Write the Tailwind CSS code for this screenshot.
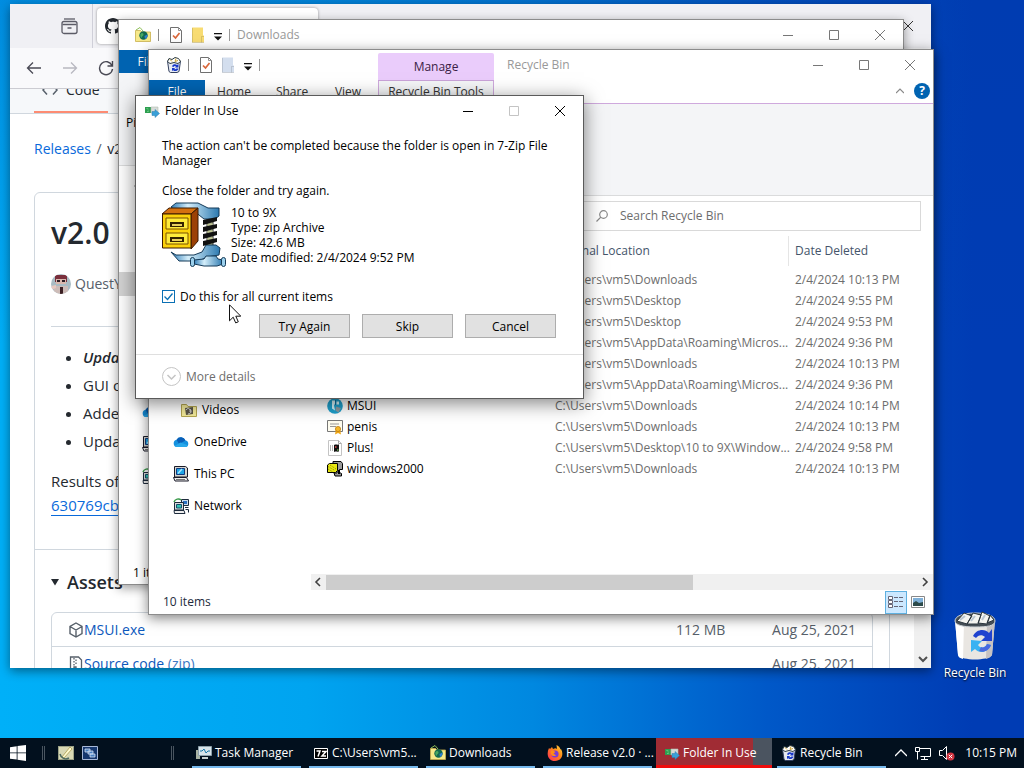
<!DOCTYPE html>
<html lang="en">
<head>
  <meta charset="UTF-8" />
  <meta name="viewport" content="width=device-width, initial-scale=1" />
  <title>Desktop</title>
  <script src="https://cdn.jsdelivr.net/npm/@tailwindcss/browser@4"></script>
</head>
<body class="h-screen flex flex-col overflow-hidden font-['Open_Sans','Noto_Sans',sans-serif] text-xs text-black bg-[linear-gradient(to_bottom,rgba(0,60,170,0.3),transparent_45%),linear-gradient(to_right,#00b0f8,#00a4f0_30%,#0088e0_52%,#0058c8_75%,#003cb4_95%)]">

  <!-- shared icons -->
  <svg class="hidden" xmlns="http://www.w3.org/2000/svg">
    <symbol id="i-downloads" viewBox="0 0 16 16">
      <path d="M.5 3.500h5l1.500 1.500h8.500v9.500H.5z" fill="#f7e98a" stroke="#c9b04c" stroke-width=".8"/>
      <path d="M1 3l4-2.500L8 4" fill="none" stroke="#8fbf5a"/>
      <circle cx="8.500" cy="8.500" r="4.200" fill="#12694f"/>
      <path d="M5.500 7c1.500-2 3-1 3 .5S7 9 6.500 11c-1-1-1.500-2.500-1-4z" fill="#4aa860"/>
      <path d="M9.500 9l3-1.500c.3 2-.5 3.500-2.500 4.500z" fill="#2f7fd0"/>
    </symbol>
    <symbol id="i-bin" viewBox="0 0 16 16">
      <path d="M1.500 4h13L13 14.500l-2 1H4.500l-1.500-1z" fill="#e6eaf2" stroke="#33405f" stroke-width="1"/>
      <path d="M1.500 4.500L3 1.500l3 1L9 .5l3.500 1 2 3L12 6.500 8 5.500 4 6.500z" fill="#fff" stroke="#2b3a40"/>
      <path d="M4 2.500l2 2M10 1.500l-1 3 3-1" stroke="#c9a030" fill="none"/>
      <path d="M6 9.500a3 3 0 0 1 5-1.500l1.500-1v3.500H9l1-1A1.800 1.800 0 0 0 7.500 10zM12.500 11.500a3.200 3.200 0 0 1-5.300 1.700l-1.200.9V11h3.200l-1 1a1.800 1.800 0 0 0 2.300-.5z" fill="#1838c8"/>
    </symbol>
    <symbol id="i-props" viewBox="0 0 16 16">
      <path d="M2.500.5h8l3 3v12h-11z" fill="#fff" stroke="#707070"/>
      <path d="M10.500.5v3h3" fill="none" stroke="#909090"/>
      <path d="M5 8.500l2.500 2.500 4-5" fill="none" stroke="#d9663a" stroke-width="1.700"/>
    </symbol>
    <symbol id="i-newfolder" viewBox="0 0 16 16">
      <path d="M2 .5h11v8h1v7H2z" fill="currentColor"/>
      <path d="M2.500 15V1M11.500 15.500v-6h2.500M2 15.500h12" fill="none" stroke="#000" stroke-opacity=".12"/>
    </symbol>
    <symbol id="i-more" viewBox="0 0 8 8">
      <path d="M0 0h8v1.200H0zM0 3.500h8L4 7.500z" fill="#111"/>
    </symbol>
    <symbol id="i-copy" viewBox="0 0 16 16">
      <path d="M1 4h6v6H1z" fill="#2e9e50"/>
      <path d="M7 4h7v6H7z" fill="#d8dcd8" stroke="#b4bcb4" stroke-width=".6"/>
      <path d="M2.500 5.500l2 .6M5 8l-2 .5" stroke="#6fd088"/>
      <path d="M8 8.500h3V6.500l4.500 4-4.500 4v-2H8z" fill="#3aa0d8" stroke="#2b7fb0" stroke-width=".5"/>
    </symbol>
    <symbol id="i-min" viewBox="0 0 10 10"><path d="M0 5.500h10" stroke="currentColor"/></symbol>
    <symbol id="i-max" viewBox="0 0 10 10"><path d="M.5.500h9v9h-9z" fill="none" stroke="currentColor"/></symbol>
    <symbol id="i-close" viewBox="0 0 10 10"><path d="M0 0l10 10M10 0L0 10" stroke="currentColor" fill="none"/></symbol>
    <symbol id="i-cloud" viewBox="0 0 16 16">
      <path d="M4 13a3.700 3.700 0 0 1-.4-7.300A5 5 0 0 1 12.500 6.500 3.300 3.300 0 0 1 12.600 13z" fill="#1490df"/>
      <path d="M3.600 5.700A5 5 0 0 1 12.500 6.500L6 10z" fill="#0a5fb8"/>
      <path d="M1.500 12l6-3.500 7.500 2.700A3 3 0 0 1 12.600 13H4a3.600 3.600 0 0 1-2.500-1z" fill="#28a8ea"/>
    </symbol>
    <symbol id="i-pc" viewBox="0 0 16 16">
      <path d="M1.500.5h11l2 1.500v9h-13z" fill="#d6d6ce" stroke="#1a1a28"/>
      <path d="M3.500 2.500h8v6h-8z" fill="#1fa6e6" stroke="#123a80"/>
      <path d="M5 7.500l4-4.500" stroke="#a8e8ff" stroke-width="1.500"/>
      <path d="M.5 11.500h13l2 3.500H2z" fill="#eee" stroke="#1a1a28"/>
      <path d="M3 13.500h9" stroke="#777"/>
    </symbol>
    <symbol id="i-net" viewBox="0 0 16 16">
      <path d="M8.500 1.500h7v6h-7z" fill="#cde" stroke="#1d2a3c"/>
      <path d="M10 3h4v3h-4z" fill="#2a6fc0"/>
      <path d="M1.500 4.500h9v7.500h-9z" fill="#ddd" stroke="#1d2a3c"/>
      <path d="M3.500 6.500h5v3.500h-5z" fill="#36c6b8" stroke="#14506a"/>
      <path d="M1 12.500h10l1 3H1.500zM12 9.500h3.500M12.500 11.500h3v3" fill="#eee" stroke="#1d2a3c"/>
      <path d="M1 4c1-3 5-4 7-2" stroke="#3a9a4a" stroke-width="1.500" fill="none"/>
    </symbol>
  </svg>

  <main class="relative flex-1 overflow-hidden">

    <!-- browser -->
    <section class="absolute left-[10px] top-1 right-[93px] bottom-[70px] bg-white flex flex-col overflow-hidden shadow-[0_3px_10px_rgba(0,0,0,0.45)]">
      <div class="h-11 shrink-0 bg-[#f0f0f4] flex items-center">
        <div class="w-[83px] h-full border-r border-[#cfcfd8] flex items-center justify-end pr-3.5">
          <svg class="size-[17px] text-[#5b5b66]" viewBox="0 0 17 17" fill="none" stroke="currentColor" stroke-width="1.300"><path d="M3 1h11"/><rect x="1" y="3.500" width="15" height="12" rx="2"/><path d="M1.500 6.500h14M6.500 10h4"/></svg>
        </div>
        <div class="ml-1 w-[221px] h-9 bg-white rounded-sm shadow-[0_0_3px_rgba(0,0,0,0.4)] flex items-center pl-2">
          <svg class="size-4" viewBox="0 0 16 16" fill="#24292f"><path d="M8 0C3.580 0 0 3.580 0 8c0 3.540 2.290 6.530 5.470 7.590.4.070.55-.17.55-.38 0-.19-.01-.82-.01-1.490-2.010.37-2.530-.49-2.690-.94-.09-.23-.48-.94-.82-1.130-.28-.15-.68-.52-.01-.53.63-.01 1.080.58 1.230.82.72 1.210 1.870.87 2.330.66.07-.52.28-.87.51-1.070-1.780-.2-3.640-.89-3.640-3.950 0-.87.31-1.590.82-2.150-.08-.2-.36-1.020.08-2.120 0 0 .67-.21 2.200.82.64-.18 1.320-.27 2-.27s1.360.09 2 .27c1.530-1.040 2.200-.82 2.200-.82.44 1.100.16 1.920.08 2.120.51.56.82 1.270.82 2.150 0 3.070-1.870 3.750-3.650 3.950.29.25.54.73.54 1.480 0 1.070-.01 1.930-.01 2.200 0 .21.15.46.55.38A8 8 0 0 0 16 8c0-4.420-3.580-8-8-8z"/></svg>
        </div>
        <button aria-label="Close browser" class="ml-auto mr-[18px] text-[#333]"><svg class="size-2.5"><use href="#i-close"/></svg></button>
      </div>
      <div class="h-[41px] shrink-0 bg-[#f9f9fb] border-b border-[#ccccd2] flex items-center pl-4 gap-5 text-[#4a4a55]">
        <button aria-label="Back"><svg class="size-4" viewBox="0 0 16 16" fill="none" stroke="currentColor" stroke-width="1.300"><path d="M15 8H1.500M7 2.500L1.500 8 7 13.500"/></svg></button>
        <button aria-label="Forward" class="text-[#b8b8c0]"><svg class="size-4" viewBox="0 0 16 16" fill="none" stroke="currentColor" stroke-width="1.300"><path d="M1 8h13.500M9 2.500L14.500 8 9 13.500"/></svg></button>
        <button aria-label="Reload"><svg class="size-4" viewBox="0 0 16 16" fill="none" stroke="currentColor" stroke-width="1.400"><path d="M14 5.500A6.500 6.500 0 1 0 14.500 9M14.500 1v5H9.500"/></svg></button>
      </div>

      <div class="flex-1 min-h-0 flex">
        <div class="flex-1 min-w-0 overflow-hidden text-[#24292f]">
          <nav class="h-[25px] bg-[#f6f8fa] border-b border-[#d0d7de] flex items-end pl-6">
            <a href="#" class="h-[33px] border-b-2 border-[#fd8c73] flex items-start gap-2 px-2 text-sm leading-5">
              <svg class="size-4 mt-0.5" viewBox="0 0 16 16" fill="none" stroke="#57606a" stroke-width="1.500"><path d="M5 3.500L1 8l4 4.500M11 3.500L15 8l-4 4.500"/></svg>
              Code
            </a>
          </nav>
          <p class="mt-[23px] ml-6 text-sm leading-6 text-[#57606a]"><a href="#" class="text-[#0969da]">Releases</a> <span class="mx-0.5">/</span> <span class="text-[#24292f]">v2.0</span></p>

          <article class="mt-[31px] ml-6 mr-6 border border-[#d0d7de] rounded-md">
            <div class="px-4 pt-5">
              <h1 class="text-[30px] leading-10 font-semibold">v2.0</h1>
              <p class="mt-[19px] flex items-center gap-1 text-sm leading-6 text-[#57606a]">
                <svg class="size-5 rounded-full" viewBox="0 0 20 20"><path d="M0 0h20v20H0z" fill="#a9bcc4"/><path d="M4 1h12v7H4z" fill="#7a2f3c"/><path d="M5 5h10v5H5z" fill="#d9b8ae"/><path d="M6 6h3v2H6zM11 6h3v2h-3z" fill="#2a1c22"/><path d="M3 12h14v8H3z" fill="#cdbcb8"/><path d="M9 13h3v7H9z" fill="#3c2024"/><path d="M0 12l5-1v3l-5 2z" fill="#e8c8c0"/></svg>
                QuestYouCraft
              </p>
              <hr class="mt-[30px] border-[#d0d7de]" />
              <ul class="mt-4 pl-8 list-disc text-[15px] leading-[28px]">
                <li><b class="italic font-semibold">Updated</b></li>
                <li>GUI optimized</li>
                <li>Added more</li>
                <li>Updated tools</li>
              </ul>
              <p class="mt-3.5 text-[15px] leading-6">Results of the scan</p>
              <p class="text-[15px] leading-6"><a href="#" class="text-[#0969da] border-b border-[#0969da]">630769cb0f</a></p>
            </div>
            <div class="mt-8 border-t border-[#d0d7de] px-4 pt-[18px]">
              <h2 class="flex items-center gap-2 text-lg leading-7 font-semibold"><svg class="size-2" viewBox="0 0 8 8"><path d="M0 1h8L4 7.500z" fill="#24292f"/></svg>Assets</h2>
              <ul class="mt-4 border border-[#d0d7de] rounded-md text-sm leading-6 text-[#57606a]">
                <li class="flex items-center h-[34px] px-4 border-b border-[#d0d7de]">
                  <svg class="size-4 shrink-0" viewBox="0 0 16 16" fill="none" stroke="#57606a" stroke-width="1.400"><path d="M8 1l6 3.500v7L8 15l-6-3.500v-7zM2 4.500L8 8l6-3.500M8 8v7"/></svg>
                  <a href="#" class="flex-1 font-medium text-[#0c58bc]">MSUI.exe</a>
                  <span class="w-24">112 MB</span>
                  <span>Aug 25, 2021</span>
                </li>
                <li class="flex items-center h-[34px] px-4">
                  <svg class="size-4 shrink-0" viewBox="0 0 16 16" fill="none" stroke="#57606a" stroke-width="1.300"><path d="M2.500 1h8l3 3v11h-11zM6 2v1.500M8 3.500V5M6 5v1.500M8 6.500V8M6 8v1.500M6 11h2v2.500H6z"/></svg>
                  <a href="#" class="flex-1 text-[#3b78c4]"><span class="font-medium text-[#0c58bc]">Source code</span> (zip)</a>
                  <span>Aug 25, 2021</span>
                </li>
              </ul>
            </div>
          </article>
        </div>
        <div class="w-[17px] bg-[#f0f0f0] flex flex-col justify-end items-center pb-1">
          <svg class="size-2.5" viewBox="0 0 10 10" fill="none" stroke="#505050" stroke-width="2"><path d="M1 3l4 4 4-4"/></svg>
        </div>
      </div>
    </section>

    <!-- Downloads window -->
    <section class="absolute left-[118px] top-[19px] right-[120px] bottom-[153px] bg-white border border-[#8c8c8c] flex flex-col overflow-hidden shadow-[0_3px_10px_rgba(0,0,0,0.4)]">
      <header class="h-[30px] shrink-0 flex items-center pl-4">
        <svg class="size-4"><use href="#i-downloads"/></svg>
        <span class="w-px h-3 bg-[#888] ml-[7px] mr-2"></span>
        <svg class="size-4 ml-px"><use href="#i-props"/></svg>
        <svg class="size-4 ml-1.5 text-[#f8dc72]"><use href="#i-newfolder"/></svg>
        <svg class="size-2 ml-2 mt-1"><use href="#i-more"/></svg>
        <span class="w-px h-3 bg-[#999] mx-[7px]"></span>
        <span class="text-[#999]">Downloads</span>
        <div class="ml-auto mr-[18px] flex gap-9 text-[#777]">
          <button aria-label="Minimize"><svg class="size-2.5"><use href="#i-min"/></svg></button>
          <button aria-label="Maximize"><svg class="size-2.5"><use href="#i-max"/></svg></button>
          <button aria-label="Close"><svg class="size-2.5"><use href="#i-close"/></svg></button>
        </div>
      </header>
      <div class="h-[23px] shrink-0"><button class="w-14 h-full bg-[#0063b1] text-white">File</button></div>
      <div class="h-[93px] shrink-0 bg-[#f4f5f7] border-b border-[#dadbdc] pl-[7px] pt-10 leading-5">Pin to Quick access</div>
      <div class="h-10 shrink-0 flex items-center pl-3.5">
        <svg class="size-2" viewBox="0 0 8 8"><path d="M6 0v8L1 4z" fill="#666"/></svg>
      </div>
      <div class="flex-1 min-h-0 pt-[66px]">
        <div class="h-6 w-40 bg-[#d3d3d3]"></div>
        <div class="mt-[108px] pl-[23px] flex flex-col gap-4">
          <svg class="size-4"><use href="#i-cloud"/></svg>
          <svg class="size-4"><use href="#i-pc"/></svg>
          <svg class="size-4"><use href="#i-net"/></svg>
        </div>
      </div>
      <footer class="h-[22px] shrink-0 pl-3.5 leading-[22px]">1 item</footer>
    </section>

    <!-- Recycle Bin window -->
    <section class="absolute left-[148px] top-[49px] right-[90px] bottom-[123px] bg-white border border-[#8c8c8c] flex flex-col overflow-hidden shadow-[0_3px_12px_rgba(0,0,0,0.5)]">
      <header class="shrink-0 flex border-b border-[#cfa9dd]">
        <div class="w-[229px]">
          <div class="h-[30px] flex items-center pl-[17px]">
            <svg class="size-4"><use href="#i-bin"/></svg>
            <span class="w-px h-3 bg-[#888] ml-1.5 mr-2"></span>
            <svg class="size-4 ml-px"><use href="#i-props"/></svg>
            <svg class="size-4 ml-1.5 text-[#d3deee]"><use href="#i-newfolder"/></svg>
            <svg class="size-2 ml-2 mt-1"><use href="#i-more"/></svg>
            <span class="w-px h-3 bg-[#999] ml-[7px]"></span>
          </div>
          <nav class="h-[23px] flex text-[#333]">
            <button class="w-14 bg-[#0063b1] text-white">File</button>
            <button class="w-[58px]">Home</button>
            <button class="w-[58px]">Share</button>
            <button class="w-[54px]">View</button>
          </nav>
        </div>
        <div class="w-[116px] pt-[3px] flex flex-col">
          <button class="h-7 bg-[#eaccfb] rounded-t-xs border-b border-[#c9a2d8] text-[#3a2246]">Manage</button>
          <button class="h-[22px] border-x border-[#cfa9dd] bg-[#f4f5f7] text-[#333] whitespace-nowrap">Recycle Bin Tools</button>
        </div>
        <div class="flex-1">
          <div class="h-[30px] flex items-center pl-[13px] pr-[18px] text-[#777]">
            <span class="text-[#999]">Recycle Bin</span>
            <div class="ml-auto flex gap-9">
              <button aria-label="Minimize"><svg class="size-2.5"><use href="#i-min"/></svg></button>
              <button aria-label="Maximize"><svg class="size-2.5"><use href="#i-max"/></svg></button>
              <button aria-label="Close"><svg class="size-2.5"><use href="#i-close"/></svg></button>
            </div>
          </div>
          <div class="h-[22px] flex items-center justify-end gap-2.5 pr-[3px]">
            <svg class="size-2" viewBox="0 0 8 8" fill="none" stroke="#888" stroke-width="1.200"><path d="M0 6l4-4 4 4"/></svg>
            <button aria-label="Help" class="size-4 rounded-full bg-[#0063b1] text-white font-bold leading-4">?</button>
          </div>
        </div>
      </header>
      <div class="h-[92px] shrink-0 bg-[#f4f5f7] border-b border-[#dadbdc]"></div>
      <div class="h-10 shrink-0 flex items-center justify-end pr-3">
        <label class="w-[338px] h-[30px] border border-[#d9d9d9] flex items-center pl-3 gap-3">
          <svg class="size-3 shrink-0" viewBox="0 0 12 12" fill="none" stroke="#888" stroke-width="1.200"><circle cx="7.500" cy="4.500" r="3.800"/><path d="M4.800 7.200L.5 11.500"/></svg>
          <input type="text" aria-label="Search Recycle Bin" placeholder="Search Recycle Bin" class="flex-1 outline-none placeholder:text-[#6d6d6d]" />
        </label>
      </div>
      <div class="flex-1 min-h-0 flex">
        <nav class="w-[162px] flex flex-col justify-start pt-[166px] pl-6 gap-4">
          <a href="#" class="flex items-center gap-[5px] h-4 pl-2"><svg class="size-4" viewBox="0 0 16 16"><path d="M.5 2.500h5l1.500 2h8.500v10H.5z" fill="#f3ea9a" stroke="#b3a550"/><path d="M4 6l8-1v7l-7 1z" fill="#5a5648"/><path d="M5 8c2-3 5-1 4 2M7 12c3 0 4-3 2-5" stroke="#ddd" fill="none"/></svg>Videos</a>
          <a href="#" class="flex items-center gap-[5px] h-4"><svg class="size-4"><use href="#i-cloud"/></svg>OneDrive</a>
          <a href="#" class="flex items-center gap-[5px] h-4"><svg class="size-4"><use href="#i-pc"/></svg>This PC</a>
          <a href="#" class="flex items-center gap-[5px] h-4"><svg class="size-4"><use href="#i-net"/></svg>Network</a>
        </nav>
        <div class="flex-1 min-w-0 flex flex-col">
          <table class="w-full table-fixed text-left text-[#6d6d6d]">
            <thead>
              <tr class="h-[33px] text-[#44546a] align-top leading-[30px]">
                <th class="p-0 w-[238px] font-normal pl-4">Name</th>
                <th class="p-0 w-[239px] font-normal pl-1.5">Original Location</th>
                <th class="p-0 font-normal"><span class="block pl-1.5 border-l border-[#e5e5e5]">Date Deleted</span></th>
              </tr>
            </thead>
            <tbody id="files"></tbody>
          </table>
          <div class="mt-auto h-4 bg-[#f0f0f0] flex items-center">
            <svg class="w-[15px] h-2.5" viewBox="0 0 15 10" fill="none" stroke="#404040" stroke-width="1.600"><path d="M9 1L5 5l4 4"/></svg>
            <div class="h-[15px] w-[59%] bg-[#cdcdcd]"></div>
            <svg class="w-[15px] h-2.5 ml-auto" viewBox="0 0 15 10" fill="none" stroke="#404040" stroke-width="1.600"><path d="M5 1l4 4-4 4"/></svg>
          </div>
        </div>
      </div>
      <footer class="h-6 shrink-0 flex items-center pl-3.5 pr-1 text-[#222b3c]">
        10 items
        <button aria-label="Details view" class="ml-auto w-[22px] h-[23px] bg-[#cce8ff] border border-[#5fb0e0] flex items-center justify-center"><svg class="size-4" viewBox="0 0 16 16" fill="none" stroke="#667"><path d="M.5 2.500h4v3h-4zM.5 6.500h4v3h-4zM.5 10.500h4v3h-4z" fill="#fff"/><path d="M6 3.500h4M11 3.500h4M6 7.500h4M11 7.500h4M6 12.500h4M11 12.500h4"/></svg></button>
        <button aria-label="Thumbnail view" class="w-[22px] h-[23px] flex items-center justify-center"><svg class="w-3.5 h-3" viewBox="0 0 14 12"><path d="M.5.500h13v11H.5z" fill="#fff" stroke="#888"/><path d="M2 2h10v8H2z" fill="#7fb0d8"/><path d="M2 7l3-2 3 2 4-1v4H2z" fill="#2c4a4a"/></svg></button>
      </footer>
    </section>

    <!-- desktop shortcut -->
    <a href="#" class="absolute right-[9px] bottom-[57px] w-20 flex flex-col items-center gap-1 text-white [text-shadow:0_1px_2px_#000]">
      <svg class="w-11 h-[52px]" viewBox="0 0 44 52">
        <path d="M2 11h40l-3 35c-4 6-30 6-34 0z" fill="#e9e6e2"/>
        <path d="M2 11l9 3-1 36c-3-1-5-2-5-4z" fill="#fff"/>
        <path d="M34 14l8-3-3 35c-1 2-3 3-6 4z" fill="#c6c2c2"/>
        <path d="M2 12c0-5 8-8 20-8s20 3 20 8-8 6-20 6S2 16 2 12z" fill="#454e56" stroke="#cfd4d8"/>
        <path d="M4 12l7-8 8 3-5 8zM14 15l6-11 8 2-3 9zM25 14l4-11 8 4-3 8zM34 14l3-8 4 5z" fill="#f4f4f0" stroke="#2c363e"/>
        <path d="M7 11l5-4M18 12l4-5M29 11l3-5" stroke="#b8c4d0" stroke-width="2"/>
        <path d="M20 27c3-7 12-8 16-3l3-4v12H28l4-4c-3-3-7-2-9 1z" fill="#2143cf"/>
        <path d="M38 36c-3 8-12 9-16 4l-4 3V31l11 1-4 4c3 4 7 3 9-1z" fill="#39b2f2"/>
        <path d="M38 36c-2 6-8 8-12 6l2-4c2 1 5 0 6-3z" fill="#4a68e0"/>
      </svg>
      Recycle Bin
    </a>

    <!-- Folder In Use dialog -->
    <section role="dialog" aria-label="Folder In Use" class="absolute left-[135px] top-[95px] w-[449px] bg-white border border-[#5a5a5a] flex flex-col shadow-[0_4px_18px_rgba(0,0,0,0.5)]">
      <header class="h-[30px] flex items-center pl-2 pr-[18px]">
        <svg class="size-4 mr-[5px]"><use href="#i-copy"/></svg>
        Folder In Use
        <div class="ml-auto flex gap-9">
          <button aria-label="Minimize"><svg class="size-2.5"><use href="#i-min"/></svg></button>
          <button aria-label="Maximize" disabled class="text-[#c4c4c4]"><svg class="size-2.5"><use href="#i-max"/></svg></button>
          <button aria-label="Close"><svg class="size-2.5"><use href="#i-close"/></svg></button>
        </div>
      </header>
      <div class="pl-[26px] pr-[27px] pt-3 leading-[15px]">
        <p>The action can't be completed because the folder is open in 7-Zip File Manager</p>
        <p class="mt-[15px]">Close the folder and try again.</p>
        <div class="mt-1 flex gap-[5px]">
          <svg class="w-16 h-[65px]" viewBox="0 0 64 65">
            <defs><linearGradient id="steel" x1="0" x2="1"><stop offset="0" stop-color="#2f7db8"/><stop offset=".35" stop-color="#d4eefa"/><stop offset="1" stop-color="#2c79b0"/></linearGradient></defs>
            <path d="M45 12h6v40h-6z" fill="#a8b088" stroke="#333"/>
            <path d="M9 5l5-4h22l10 5h11v8l-4 3H42L32 9H14z" fill="url(#steel)" stroke="#153a58"/>
            <path d="M9 50l5 3h18l8-3 4-7h10l4 3-1 7-12 2-8 4H17z" fill="url(#steel)" stroke="#153a58"/>
            <path d="M41 18l14-3v4l-14 4zM41 25l14-3v4l-14 4zM41 32l14-3v4l-14 4zM41 39l14-3v4l-14 4z" fill="#111"/>
            <path d="M45 23l6-1M45 30l6-1M45 37l6-1" stroke="#c8cc9a"/>
            <path d="M0 12l7-6h29l-7 6z" fill="#d47010" stroke="#3c1a00"/>
            <path d="M29 12l7-6v33l-7 8z" fill="#9c4106" stroke="#3c1a00"/>
            <path d="M.5 12H29v34H.5z" fill="#fbd20a" stroke="#3c1a00"/>
            <path d="M4 16h22v11H4zM4 31h22v11H4z" fill="#ffec3c" stroke="#7a5000"/>
            <path d="M8 20h14v5H8zM8 35h14v5H8z" fill="#332200"/>
            <path d="M10 23h10M10 38h10" stroke="#e8d060" stroke-width="2"/>
            <path d="M32 58l10-1 2-3h10l2 3 5 1v4l-6 2H42l-10-2z" fill="url(#steel)" stroke="#153a58"/>
            <rect x="28.500" y="55.500" width="4" height="9" rx="2" fill="#9cd0ec" stroke="#153a58"/>
            <rect x="59.500" y="55.500" width="4" height="9" rx="2" fill="#9cd0ec" stroke="#153a58"/>
          </svg>
          <p class="pt-[3px]">10 to 9X<br />Type: zip Archive<br />Size: 42.6 MB<br />Date modified: 2/4/2024 9:52 PM</p>
        </div>
        <div class="mt-[19px] flex items-center gap-[5px] h-5">
          <span class="grid">
            <input id="all-items" type="checkbox" checked class="col-start-1 row-start-1 appearance-none size-[13px] border border-[#0a70b4] bg-white" />
            <svg class="col-start-1 row-start-1 size-[13px] pointer-events-none" viewBox="0 0 13 13" fill="none" stroke="#0a70b4"><path d="M2.500 6.500l3 3 5-6" stroke-width="1.300"/></svg>
          </span>
          <label for="all-items">Do this for all current items</label>
        </div>
        <div class="mt-2 mb-4 flex justify-end gap-3">
          <button class="w-[91px] h-6 bg-[#e1e1e1] border border-[#adadad]">Try Again</button>
          <button class="w-[91px] h-6 bg-[#e1e1e1] border border-[#adadad]">Skip</button>
          <button class="w-[91px] h-6 bg-[#e1e1e1] border border-[#adadad]">Cancel</button>
        </div>
      </div>
      <button class="h-11 border-t border-[#dfdfdf] flex items-center gap-[5px] pl-[26px] text-[#6d6d6d]">
        <svg class="size-[19px]" viewBox="0 0 19 19" fill="none" stroke="#c4c4c4"><circle cx="9.500" cy="9.500" r="9"/><path d="M5.500 8l4 4 4-4" stroke-width="1.500"/></svg>
        More details
      </button>
    </section>

    <!-- mouse pointer -->
    <svg class="absolute left-[229px] top-[304px] w-3 h-5" viewBox="0 0 12 20"><path d="M.5.800v16l3.700-3.600 2.500 5.700 2.600-1.100-2.500-5.600h5z" fill="#fff" stroke="#111"/></svg>
  </main>

  <!-- taskbar -->
  <footer class="h-[30px] shrink-0 bg-[#02101e] text-white flex items-center">
    <button aria-label="Start" class="w-9 h-full flex items-center justify-center"><svg class="size-4" viewBox="0 0 16 16" fill="#fff"><path d="M0 2.200L6.700 1.200v6.300H0zM7.500 1.100L16 0v7.500H7.500zM0 8.300h6.700v6.300L0 13.700zM7.500 8.300H16V16l-8.500-1.200z"/></svg></button>
    <span class="ml-1.5 w-[3px] h-3.5 border-x border-[#4a5560]"></span>
    <button aria-label="Notes" class="ml-[13px]"><svg class="size-4" viewBox="0 0 16 16"><path d="M0 1h16v14H0z" fill="#9ca287"/><path d="M1 2h14v12H1z" fill="#d8d8b4"/><path d="M4 12L12 2l2 2-8 9z" fill="#fffbd0" stroke="#a09040" stroke-width=".7"/><path d="M2 9a6 6 0 0 0 9 4" stroke="#4d6a60" fill="none" stroke-width="1.500"/></svg></button>
    <button aria-label="Windows" class="ml-2"><svg class="size-4" viewBox="0 0 16 16"><path d="M.5 1.500h15v13H.5z" fill="#16376e" stroke="#a8b8d8"/><path d="M3 4h5v3H3zM6 6h5v3H6zM8 9h5v3H8z" fill="#4a80c0" stroke="#d4e0f4" stroke-width=".8"/></svg></button>
    <span class="ml-[73px] w-[3px] h-3.5 border-x border-[#4a5560]"></span>
    <nav class="ml-[14px] h-full flex">
      <button class="w-[117px] h-full px-1 flex"><span class="w-full h-full border-b-2 border-[#76b9ed] pt-0.5 pl-1 flex items-center gap-[3px] whitespace-nowrap"><svg class="size-4 shrink-0" viewBox="0 0 16 16"><path d="M0 5h4v9H0z" fill="#a9b4a4"/><path d="M2.500 1.500h13v9h-13z" fill="#d8e4ea" stroke="#8ca0aa"/><path d="M4 6h2l2-2 2 4 2-2h2" stroke="#1878a8" fill="none"/><path d="M6 12h6v2H6z" fill="#c8d0d0"/></svg>Task Manager</span></button>
      <button class="w-[117px] h-full px-1 flex"><span class="w-full h-full border-b-2 border-[#76b9ed] pt-0.5 pl-1 flex items-center gap-[3px] whitespace-nowrap"><svg class="size-4 shrink-0" viewBox="0 0 16 16"><path d="M1.500 3.500h13v10h-13z" fill="#000" stroke="#fff"/><path d="M3.500 6h3.500l-2 5.500M9 6.500h4l-4 4.500h4" stroke="#fff" stroke-width="1.500" fill="none"/></svg>C:\Users\vm5...</span></button>
      <button class="w-[117px] h-full px-1 flex"><span class="w-full h-full border-b-2 border-[#76b9ed] pt-0.5 pl-1 flex items-center gap-[3px] whitespace-nowrap"><svg class="size-4 shrink-0"><use href="#i-downloads"/></svg>Downloads</span></button>
      <button class="w-[117px] h-full px-1 flex"><span class="w-full h-full border-b-2 border-[#76b9ed] pt-0.5 pl-1 flex items-center gap-[3px] whitespace-nowrap"><svg class="size-4 shrink-0" viewBox="0 0 16 16"><defs><linearGradient id="fox" x1="0" x2="1" y1="1" y2="0"><stop offset="0" stop-color="#ff2a5a"/><stop offset=".6" stop-color="#ff8a16"/><stop offset="1" stop-color="#ffe14a"/></linearGradient></defs><path d="M2 3l1 1 2-2 1 2c2-1 3-1 4 0L9.500 0C12 1 13 3 13.500 4.500L14 4c3 5 1 12-6 12C1 16-1 9 2 3z" fill="url(#fox)"/><circle cx="8" cy="9" r="3.600" fill="#7a3ad8"/><path d="M4 6c2-1 3 0 4.500 1L6.500 8.500 9 10.500c-3 1.500-6 0-5-4.500z" fill="#ff8a16"/></svg>Release v2.0 · ...</span></button>
      <button class="w-[116px] h-full bg-linear-to-r from-[#a02c34] from-84% to-[#4b5460] to-84% flex"><span class="w-full h-full border-b-3 border-[#f00c0c] pt-0.5 pl-2 flex items-center gap-[3px] whitespace-nowrap"><svg class="size-4 shrink-0"><use href="#i-copy"/></svg>Folder In Use</span></button>
      <button class="w-[117px] h-full px-1 ml-px flex"><span class="w-full h-full border-b-2 border-[#76b9ed] pt-0.5 pl-1 flex items-center gap-[3px] whitespace-nowrap"><svg class="size-4 shrink-0"><use href="#i-bin"/></svg>Recycle Bin</span></button>
    </nav>
    <div class="ml-auto flex items-center gap-2 pr-[7px]">
      <svg class="w-3 h-2" viewBox="0 0 12 8" fill="none" stroke="#fff" stroke-width="1.300"><path d="M0 7l6-6 6 6"/></svg>
      <svg class="size-4" viewBox="0 0 16 16" fill="none" stroke="#fff"><path d="M4.500 3.500h11v8h-10M6 14.500h7M9.500 11.500v3M.5 2.500h4v4h-4zM2.500 6.500v8"/></svg>
      <svg class="size-4" viewBox="0 0 16 16" fill="none" stroke="#fff"><path d="M.5 5.500h3l4-4v13l-4-4h-3z"/><circle cx="11.500" cy="11.500" r="4" fill="#d23440" stroke="none"/><path d="M9.800 9.800l3.400 3.400M13.200 9.800l-3.400 3.400"/></svg>
      <time class="ml-0.5 whitespace-nowrap">10:15 PM</time>
    </div>
  </footer>

  <script>
    const files = [
      ['', '', 'C:\\Users\\vm5\\Downloads', '2/4/2024 10:13 PM'],
      ['', '', 'C:\\Users\\vm5\\Desktop', '2/4/2024 9:55 PM'],
      ['', '', 'C:\\Users\\vm5\\Desktop', '2/4/2024 9:53 PM'],
      ['', '', 'C:\\Users\\vm5\\AppData\\Roaming\\Micros...', '2/4/2024 9:36 PM'],
      ['', '', 'C:\\Users\\vm5\\Downloads', '2/4/2024 10:13 PM'],
      ['', '', 'C:\\Users\\vm5\\AppData\\Roaming\\Micros...', '2/4/2024 9:36 PM'],
      ['msui', 'MSUI', 'C:\\Users\\vm5\\Downloads', '2/4/2024 10:14 PM'],
      ['cert', 'penis', 'C:\\Users\\vm5\\Downloads', '2/4/2024 10:13 PM'],
      ['theme', 'Plus!', 'C:\\Users\\vm5\\Desktop\\10 to 9X\\Window...', '2/4/2024 9:58 PM'],
      ['zip', 'windows2000', 'C:\\Users\\vm5\\Downloads', '2/4/2024 10:13 PM']
    ];

    const icons = {
      '': '',
      msui: '<circle cx="8" cy="8" r="7.800" fill="#1fa0cc"/><path d="M5 2.500h3v3l-1 2 1 5-3-2zM9.500 3.500h2.500v3H9.500z" fill="#d8f4fa"/><path d="M9 8.500l5 1.500-2.500 4.500-3-2z" fill="#8f9aa0"/><path d="M8.500 2v5" stroke="#0c6c98"/>',
      cert: '<path d="M.5 1.500h15v11H.5z" fill="#fffdf0" stroke="#777"/><path d="M3 5h9M3 7.500h6" stroke="#999"/><path d="M9 10l-1 5.500 3-1.500 3 1.500-1-5.500z" fill="#f0a818"/><circle cx="11" cy="10" r="2.600" fill="#f5b82a" stroke="#b87408" stroke-width=".7"/>',
      theme: '<path d="M1.500.5h10l3 3v12h-13z" fill="#fff" stroke="#c4c4c4"/><path d="M11.500.5v3h3" fill="none" stroke="#aaa"/><path d="M7 5c2-1 3 0 5-.5v7c-2 .5-3-.5-5 .5z" fill="#111"/><path d="M3 6h3M3 8h3M3 10h3" stroke="#666" stroke-dasharray="1 1"/><path d="M8 6h1.500v2H8z" fill="#b04040"/><path d="M10 9h1.500v2H10z" fill="#508040"/>',
      zip: '<path d="M6 .5h8l1.500 2v6h-3v3l2 1v2.500H8l-1-3h3V4H6z" fill="#9a9a9a" stroke="#000"/><path d="M.5 4l2-1.500h8v7l-2 2h-8z" fill="#e6e610" stroke="#000"/><path d="M1 5.500l7 4M1 8l5 3M3 4l6 4" stroke="#8a8a00" stroke-dasharray="1 1"/><path d="M12 9v4" stroke="#000" stroke-width="2"/>'
    };

    document.getElementById('files').innerHTML = files.map(([icon, name, place, date]) => `
      <tr class="h-[21px]">
        <td class="p-0 pl-4 text-black"><span class="flex items-center gap-1"><svg class="size-4" viewBox="0 0 16 16">${icons[icon]}</svg>${name}</span></td>
        <td class="p-0 pl-1.5 whitespace-nowrap">${place}</td>
        <td class="p-0 pl-[7px] whitespace-nowrap">${date}</td>
      </tr>`).join('');
  </script>
</body>
</html>
